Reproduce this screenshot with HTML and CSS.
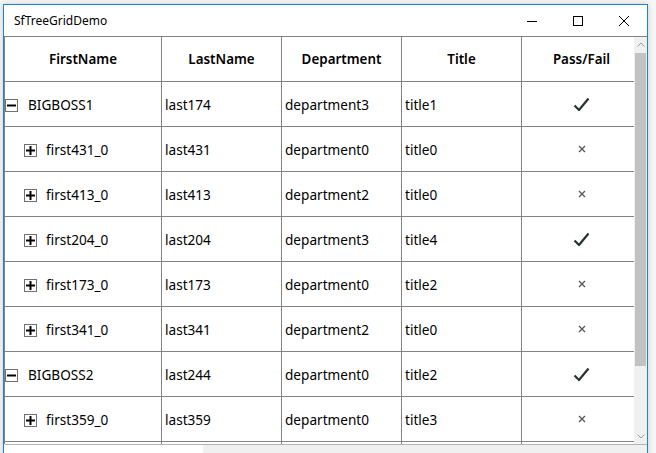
FILE: index.html
```html
<!DOCTYPE html>
<html lang="en-us">
  <head>
    <meta charset="utf-8">
    <title>SfTreeGridDemo</title>
    <link rel="stylesheet" href="styles.css">
  </head>
  <body>
    <div class="window">
      <div class="titleBar">
        <span class="titleText">SfTreeGridDemo</span>
        <div class="captionButtons">
          <span class="capBtn">
            <svg width="10" height="10" viewBox="0 0 10 10"><path d="M0 5.5h10" stroke="#000" stroke-width="1"/></svg>
          </span>
          <span class="capBtn">
            <svg width="10" height="10" viewBox="0 0 10 10"><rect x="0.5" y="0.5" width="9" height="9" fill="none" stroke="#000" stroke-width="1"/></svg>
          </span>
          <span class="capBtn">
            <svg width="10" height="10" viewBox="0 0 10 10"><path d="M0 0L10 10M10 0L0 10" stroke="#000" stroke-width="1"/></svg>
          </span>
        </div>
      </div>

      <div class="gridArea">
        <div class="gridView">
          <div class="treeGrid" id="treeGrid">
            <div class="cell head">FirstName</div>
            <div class="cell head">LastName</div>
            <div class="cell head">Department</div>
            <div class="cell head">Title</div>
            <div class="cell head">Pass/Fail</div>
          </div>
        </div>
        <div class="vScroll">
          <div class="arrow up">
            <svg width="8" height="5" viewBox="0 0 8 5"><path d="M0.5 4.5L4 1L7.5 4.5" fill="none" stroke="#a0a0a0" stroke-width="1"/></svg>
          </div>
          <div class="thumb"></div>
          <div class="track"></div>
          <div class="arrow down">
            <svg width="8" height="5" viewBox="0 0 8 5"><path d="M0.5 0.5L4 4L7.5 0.5" fill="none" stroke="#a0a0a0" stroke-width="1"/></svg>
          </div>
        </div>
      </div>
      <div class="hScroll"><div class="hThumb"></div></div>
    </div>

    <script>
      // rows of the tree: level 0 = employee, level 1 = child record
      const rows = [
        [0, 'BIGBOSS1', 'last174', 'department3', 'title1', true],
        [1, 'first431_0', 'last431', 'department0', 'title0', false],
        [1, 'first413_0', 'last413', 'department2', 'title0', false],
        [1, 'first204_0', 'last204', 'department3', 'title4', true],
        [1, 'first173_0', 'last173', 'department0', 'title2', false],
        [1, 'first341_0', 'last341', 'department2', 'title0', false],
        [0, 'BIGBOSS2', 'last244', 'department0', 'title2', true],
        [1, 'first359_0', 'last359', 'department0', 'title3', false]
      ];

      const grid = document.getElementById('treeGrid');

      const checkSvg = '<svg width="17" height="15" viewBox="0 0 17 15"><path d="M1.5 8.5L6 13L15.5 1.5" fill="none" stroke="#2b332e" stroke-width="2.2" stroke-linejoin="round"/></svg>';
      const crossSvg = '<svg width="8" height="8" viewBox="0 0 8 8"><path d="M1 1L7 7M7 1L1 7" stroke="#555" stroke-width="1.3"/></svg>';

      function expander(open) {
        let sign = '<path d="M2 6.5h9" stroke="#000" stroke-width="2"/>';
        if (!open) {
          sign += '<path d="M6.5 2v9" stroke="#000" stroke-width="2"/>';
        }
        return '<svg class="expander" width="13" height="13" viewBox="0 0 13 13">' +
          '<rect x="0.5" y="0.5" width="12" height="12" fill="#fff" stroke="#707070"/>' + sign + '</svg>';
      }

      for (let i = 0; i < rows.length; i++) {
        const r = rows[i];
        const first = document.createElement('div');
        first.className = 'cell first level' + r[0];
        first.innerHTML = expander(r[0] === 0) + '<span>' + r[1] + '</span>';
        grid.appendChild(first);

        for (let c = 2; c <= 4; c++) {
          const cell = document.createElement('div');
          cell.className = 'cell';
          cell.textContent = r[c];
          grid.appendChild(cell);
        }

        const pass = document.createElement('div');
        pass.className = 'cell mark';
        pass.innerHTML = r[5] ? checkSvg : crossSvg;
        grid.appendChild(pass);
      }

      // the next row only peeks out under the last one
      for (let c = 0; c < 5; c++) {
        const cell = document.createElement('div');
        cell.className = 'cell';
        grid.appendChild(cell);
      }
    </script>
  </body>
</html>
```

FILE: styles.css
```css
html {
  font-family: "Noto Sans", "Open Sans", sans-serif;
}

body {
  margin: 0;
  padding: 4px 0 0 3px;
  background-color: #f7f7f7;
  height: 449px;
  overflow: hidden;
}

.window {
  width: 643px;
  height: 470px;
  border: 1px solid #1883d7;
  background-color: #fff;
  box-shadow: 0 0 6px rgba(0, 0, 0, .18);
  display: flex;
  flex-direction: column;
}

.titleBar {
  height: 31px;
  display: flex;
  align-items: center;
  justify-content: space-between;
  flex-shrink: 0;
}

.titleText {
  font-size: 12px;
  color: #000;
  padding-left: 10px;
  padding-bottom: 1px;
}

.captionButtons {
  display: flex;
  height: 100%;
}

.capBtn {
  width: 46px;
  height: 100%;
  display: flex;
  align-items: center;
  justify-content: center;
}

.gridArea {
  display: flex;
  height: 407px;
  flex-shrink: 0;
  border-top: 1px solid #828282;
}

.gridView {
  flex: 1;
  overflow: hidden;
  border-left: 1px solid #828282;
}

.treeGrid {
  display: grid;
  grid-template-columns: 157px 120px 120px 120px 120px;
  grid-auto-rows: 45px;
  width: 637px;
}

.cell {
  border-right: 1px solid #828282;
  border-bottom: 1px solid #828282;
  display: flex;
  align-items: center;
  padding-left: 3px;
  font-size: 13.6px;
  color: #000;
  white-space: nowrap;
  overflow: hidden;
}

.cell.head {
  justify-content: center;
  padding-left: 0;
  font-weight: 600;
  font-size: 13.4px;
}

.cell.first .expander {
  flex-shrink: 0;
  margin-top: 2px;
}

.cell.level0 {
  padding-left: 0;
}

.cell.level0 .expander {
  margin-right: 10px;
}

.cell.level1 {
  padding-left: 19px;
}

.cell.level1 .expander {
  margin-right: 9px;
}

.cell.mark {
  justify-content: center;
  padding-left: 0;
  padding-right: 0;
}

.vScroll {
  width: 13px;
  background-color: #f0f0f0;
  display: flex;
  flex-direction: column;
  flex-shrink: 0;
}

.vScroll .arrow {
  height: 15px;
  display: flex;
  align-items: center;
  justify-content: center;
}

.vScroll .thumb {
  height: 313px;
  margin: 1px 1px;
  background-color: #c2c2c2;
}

.vScroll .track {
  flex: 1;
}

.hScroll {
  height: 17px;
  border-top: 1px solid #b4b4b4;
  background-color: #f0f0f0;
  margin-left: 1px;
}

.hThumb {
  width: 198px;
  height: 100%;
  background-color: #fff;
}
```
